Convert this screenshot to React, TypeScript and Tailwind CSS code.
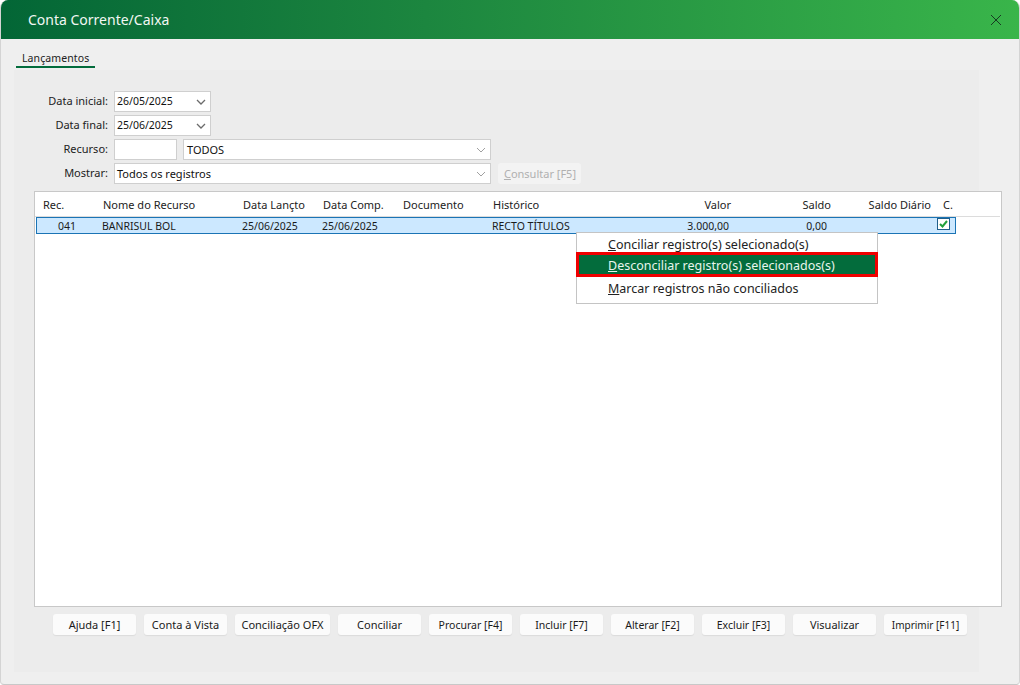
import React from "react";

const font = { fontFamily: '"Noto Sans", "Open Sans", sans-serif' };

function Chevron({ light }: { light?: boolean }) {
  return (
    <svg width="10" height="6" viewBox="0 0 10 6" fill="none" stroke={light ? "#a0a0a0" : "#6b6b6b"} strokeWidth={light ? 1 : 1.3} className="shrink-0">
      <path d="M1 1l4 4 4-4" />
    </svg>
  );
}

function Field({ children, className, arrow, light, textClass }: { children?: React.ReactNode; className: string; arrow?: boolean; light?: boolean; textClass?: string }) {
  return (
    <div className={`h-[21px] border border-[#cfcfcf] bg-white flex items-center justify-between pr-[4px] text-[#111] ${className}`}>
      <span className={textClass}>{children}</span>
      {arrow && <Chevron light={light} />}
    </div>
  );
}

function Label({ children }: { children: React.ReactNode }) {
  return <div className="w-[74px] text-right text-[11px] text-[#222] leading-[20px]">{children}</div>;
}

const footer: [string, string, string][] = [
  ["Ajuda [F1]", "w-[83px]", "text-[11px] pt-[1px]"],
  ["Conta à Vista", "w-[83px]", "text-[11px] pt-[1px]"],
  ["Conciliação OFX", "w-[95px]", "text-[11px] pt-[1px]"],
  ["Conciliar", "w-[83px]", "text-[11px] pt-[1px]"],
  ["Procurar [F4]", "w-[83px]", "text-[10.5px] pt-[2px]"],
  ["Incluir [F7]", "w-[83px]", "text-[10.5px] pt-[2px]"],
  ["Alterar [F2]", "w-[83px]", "text-[10.5px] pt-[2px]"],
  ["Excluir [F3]", "w-[83px]", "text-[10.5px] pt-[2px]"],
  ["Visualizar", "w-[83px]", "text-[11px] pt-[1px]"],
  ["Imprimir [F11]", "w-[83px]", "text-[10px] pt-[2px]"],
];

function Cell({ w, right, pl, children }: { w: string; right?: boolean; pl?: string; children?: React.ReactNode }) {
  return <div className={`shrink-0 whitespace-nowrap ${w} ${pl ?? ""} ${right ? "text-right" : ""}`}>{children}</div>;
}

export default function App() {
  return (
    <div style={font} className="relative w-[1020px] h-[685px] overflow-hidden bg-white">
      <div className="flex flex-col w-[1020px] h-[685px] bg-[#efefef] rounded-t-[8px] rounded-b-[4px] overflow-hidden border-b border-[#c8c8c8] border-x border-x-[#d4d4d4]">
        <div className="h-[39px] shrink-0 -mx-px flex items-center justify-between bg-gradient-to-r from-[#036636] to-[#39b54a] pl-[28px] pr-[18px]">
          <span className="text-[14px] text-[#f2f7f3]">Conta Corrente/Caixa</span>
          <svg width="12" height="12" viewBox="0 0 12 12" stroke="#173a22" strokeWidth="1">
            <path d="M1 1l10 10M11 1L1 11" />
          </svg>
        </div>
        <div className="pl-[15px] pt-[10px] h-[31px] shrink-0">
          <div className="w-[79px] h-[19px] border-b-2 border-[#036c3c] text-[10.5px] tracking-[0.1px] text-[#222] pl-[6px] leading-[19px]">Lançamentos</div>
        </div>
        <div className="ml-[13px] w-[965px] h-[602px] bg-[#ececec] flex flex-col pl-[20px] pt-[21px]">
          <div className="flex flex-col gap-[3px]">
            <div className="flex">
              <Label>Data inicial:</Label>
              <Field className="ml-[6px] w-[97px] pl-[2px] !pr-[4px]" textClass="text-[10.5px]" arrow>26/05/2025</Field>
            </div>
            <div className="flex">
              <Label>Data final:</Label>
              <Field className="ml-[6px] w-[97px] pl-[2px] !pr-[4px]" textClass="text-[10.5px]" arrow>25/06/2025</Field>
            </div>
            <div className="flex">
              <Label>Recurso:</Label>
              <Field className="ml-[6px] w-[63px]" />
              <Field className="ml-[6px] w-[308px] pl-[3px] !pr-[4px]" textClass="text-[11px] mt-[1px]" arrow light>TODOS</Field>
            </div>
            <div className="flex">
              <Label>Mostrar:</Label>
              <Field className="ml-[6px] w-[377px] pl-[2px] !pr-[4px]" textClass="text-[11px] mt-[1px]" arrow light>Todos os registros</Field>
              <div className="ml-[7px] w-[83px] h-[21px] rounded-[3px] bg-[#f3f3f3] text-[11px] text-[#b0b0b0] flex items-center justify-center pt-[1px] pl-[1px]">
                <span><span className="underline">C</span>onsultar [F5]</span>
              </div>
            </div>
          </div>

          <div className="mt-[7px] w-[968px] h-[416px] shrink-0 bg-white border border-[#c8c8c8] relative z-10 text-[#222]">
            <div className="h-[25px] flex items-center border-b border-[#dcdcdc] mr-[1px] text-[11px] pt-[2px]">
              <Cell w="w-[68px]" pl="pl-[8px]">Rec.</Cell>
              <Cell w="w-[140px]">Nome do Recurso</Cell>
              <Cell w="w-[80px]">Data Lançto</Cell>
              <Cell w="w-[80px]">Data Comp.</Cell>
              <Cell w="w-[90px]">Documento</Cell>
              <Cell w="w-[100px]">Histórico</Cell>
              <Cell w="w-[138px]" right>Valor</Cell>
              <Cell w="w-[100px]" right>Saldo</Cell>
              <Cell w="w-[100px]" right>Saldo Diário</Cell>
              <Cell w="w-[22px]" pl="pl-[12px]">C.</Cell>
            </div>
            <div className="ml-px w-[920px] h-[17px] flex items-center bg-[#cce8ff] border border-[#1b74b5] text-[#1a1a1a] text-[10.5px]">
              <Cell w="w-[65px]" right pl="pr-[26px] pt-[2px]">041</Cell>
              <Cell w="w-[140px]" pl="pt-[2px]">BANRISUL BOL</Cell>
              <Cell w="w-[80px]" pl="pt-[2px]">25/06/2025</Cell>
              <Cell w="w-[80px]" pl="pt-[2px]">25/06/2025</Cell>
              <Cell w="w-[90px]" />
              <Cell w="w-[100px]" pl="pt-[2px]">RECTO TÍTULOS</Cell>
              <Cell w="w-[137px]" right pl="pt-[2px]">3.000,00</Cell>
              <Cell w="w-[100px]" right pl="pr-[2px] pt-[2px]">0,00</Cell>
              <div className="ml-[108px] mt-[-3px] w-[13px] h-[12px] shrink-0 border border-[#1f5f8b] bg-white flex items-center justify-center">
                <svg width="9" height="8" viewBox="0 0 9 8" fill="none" stroke="#22a03c" strokeWidth="2">
                  <path d="M1 4l2.5 2.5L8 1" />
                </svg>
              </div>
            </div>
          </div>

          <div className="mt-[7px] ml-[19px] flex gap-[8px]">
            {footer.map(([t, w, s]) => (
              <div key={t} className={`${w} ${s} h-[21px] rounded-[3px] bg-[#fbfbfb] shadow-[0_1px_1px_#dcdcdc] text-[#1a1a1a] flex items-center justify-center whitespace-nowrap`}>
                {t}
              </div>
            ))}
          </div>
        </div>
      </div>

      <div className="absolute z-20 left-[576px] top-[232px] w-[302px] h-[72px] bg-white border border-[#c4c4c4] pt-[2px] text-[12.5px] text-[#222]">
        <div className="h-[17px] pl-[31px] leading-[19px]"><span className="underline">C</span>onciliar registro(s) selecionado(s)</div>
        <div className="-ml-px -mr-px h-[25px] border-[3px] border-[#f00000] bg-[#036c3c] text-[#e8f5ec] pl-[29px] leading-[21px]"><span className="underline">D</span>esconciliar registro(s) selecionados(s)</div>
        <div className="h-[20px] pl-[31px] leading-[23px]"><span className="underline">M</span>arcar registros não conciliados</div>
      </div>
    </div>
  );
}
